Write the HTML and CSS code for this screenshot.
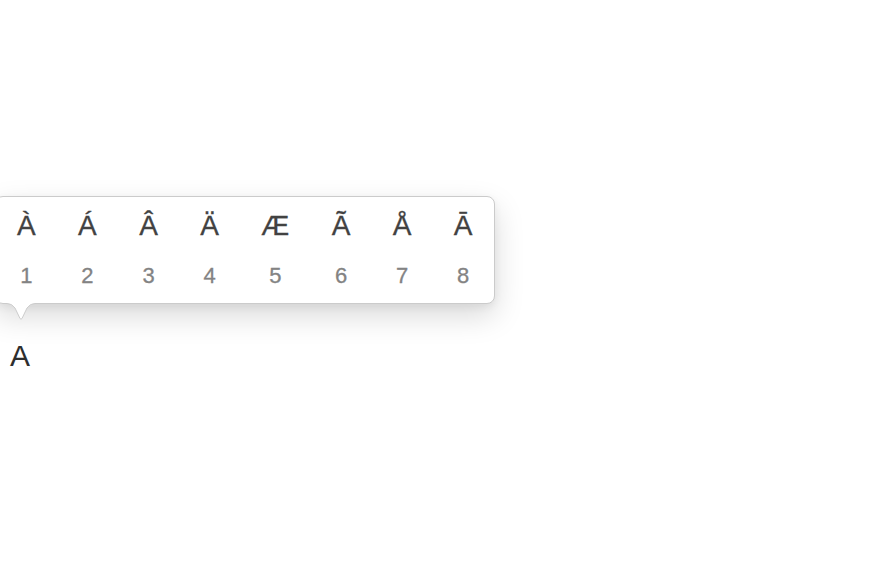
FILE: index.html
```html
<!DOCTYPE html>
<html>
<head>
<meta charset="utf-8">
<link rel="stylesheet" href="styles.css">
</head>
<body>
<div class="editor">
  <div class="text">A</div>
</div>
<div class="popover">
  <div class="items">
    <div class="item"><span class="ch">À</span><span class="num">1</span></div>
    <div class="item"><span class="ch">Á</span><span class="num">2</span></div>
    <div class="item"><span class="ch">Â</span><span class="num">3</span></div>
    <div class="item"><span class="ch">Ä</span><span class="num">4</span></div>
    <div class="item"><span class="ch">Æ</span><span class="num">5</span></div>
    <div class="item"><span class="ch">Ã</span><span class="num">6</span></div>
    <div class="item"><span class="ch">Å</span><span class="num">7</span></div>
    <div class="item"><span class="ch">Ā</span><span class="num">8</span></div>
  </div>
  <svg class="arrow" width="28" height="19" viewBox="0 0 28 19">
    <path d="M0,-1 L0,0.5 Q5,0.5 8,5 L13,15.5 Q14,17 15,15.5 L20,5 Q23,0.5 28,0.5 L28,-1 Z" fill="#fff"/>
    <path d="M0,0.5 Q5,0.5 8,5 L13,15.5 Q14,17 15,15.5 L20,5 Q23,0.5 28,0.5" fill="none" stroke="#cdcdcd" stroke-width="1"/>
  </svg>
</div>
</body>
</html>
```
FILE: styles.css
```css
html, body {
  margin: 0;
  padding: 0;
  background: #fff;
  width: 870px;
  height: 588px;
  overflow: hidden;
  font-family: "Liberation Sans", Arial, sans-serif;
}
.editor {
  padding: 338px 0 0 10px;
}
.text {
  font-size: 30px;
  line-height: 36px;
  color: #2e2e2e;
}
.popover {
  position: absolute;
  top: 196px;
  left: -5px;
  background: #fff;
  border: 1px solid #cbcbcb;
  border-radius: 8px;
  box-shadow: 0 12px 30px rgba(0, 0, 0, 0.15), 0 3px 8px rgba(0, 0, 0, 0.06);
  padding: 12px 21px 13px 21px;
}
.items {
  display: flex;
  gap: 42.4px;
}
.item {
  display: flex;
  flex-direction: column;
  align-items: center;
  gap: 19px;
}
.ch {
  font-size: 28px;
  line-height: 34px;
  color: #424242;
  -webkit-text-stroke: 0.3px #424242;
}
.num {
  font-size: 22px;
  line-height: 28px;
  color: #838383;
  -webkit-text-stroke: 0.3px #838383;
}
.arrow {
  position: absolute;
  left: 11px;
  top: 106px;
  display: block;
}
```
